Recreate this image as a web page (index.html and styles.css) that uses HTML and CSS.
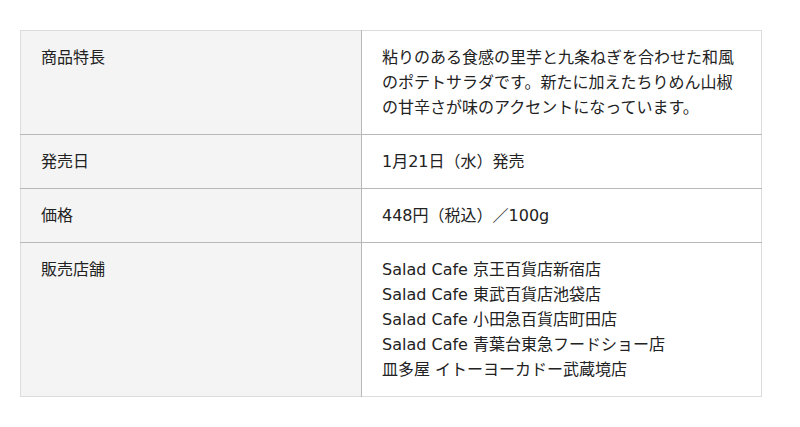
FILE: index.html
```html
<!DOCTYPE html>
<html lang="ja">
<head>
<meta charset="utf-8">
<link rel="stylesheet" href="styles.css">
</head>
<body>
<div class="wrap">
  <table class="spec">
    <tr>
      <th>商品特長</th>
      <td>粘りのある食感の里芋と九条ねぎを合わせた和風のポテトサラダです。新たに加えたちりめん山椒の甘辛さが味のアクセントになっています。</td>
    </tr>
    <tr>
      <th>発売日</th>
      <td>1月21日（水）発売</td>
    </tr>
    <tr>
      <th>価格</th>
      <td>448円（税込）／100g</td>
    </tr>
    <tr>
      <th>販売店舗</th>
      <td>Salad Cafe 京王百貨店新宿店<br>Salad Cafe 東武百貨店池袋店<br>Salad Cafe 小田急百貨店町田店<br>Salad Cafe 青葉台東急フードショー店<br>皿多屋 イトーヨーカドー武蔵境店</td>
    </tr>
  </table>
</div>
</body>
</html>
```

FILE: styles.css
```css
html, body {
  margin: 0;
  padding: 0;
  background: #fff;
}
body {
  font-family: "DejaVu Sans", "Noto Sans CJK JP", sans-serif;
  font-size: 16px;
  line-height: 25px;
  color: #222;
}
.wrap {
  padding: 30px 38px 0 20px;
}
.spec {
  width: 742px;
  border-collapse: collapse;
  border: 1px solid #dcdcdc;
}
.spec th,
.spec td {
  text-align: left;
  vertical-align: top;
  font-weight: normal;
  padding: 14px 20px;
  border-top: 1px solid #b8b8b8;
}
.spec tr:first-child th,
.spec tr:first-child td {
  border-top: 1px solid #dcdcdc;
}
.spec th {
  width: 300px;
  background: #f4f4f4;
  border-right: 1px solid #b8b8b8;
}
.spec td {
  background: #fff;
}
```
